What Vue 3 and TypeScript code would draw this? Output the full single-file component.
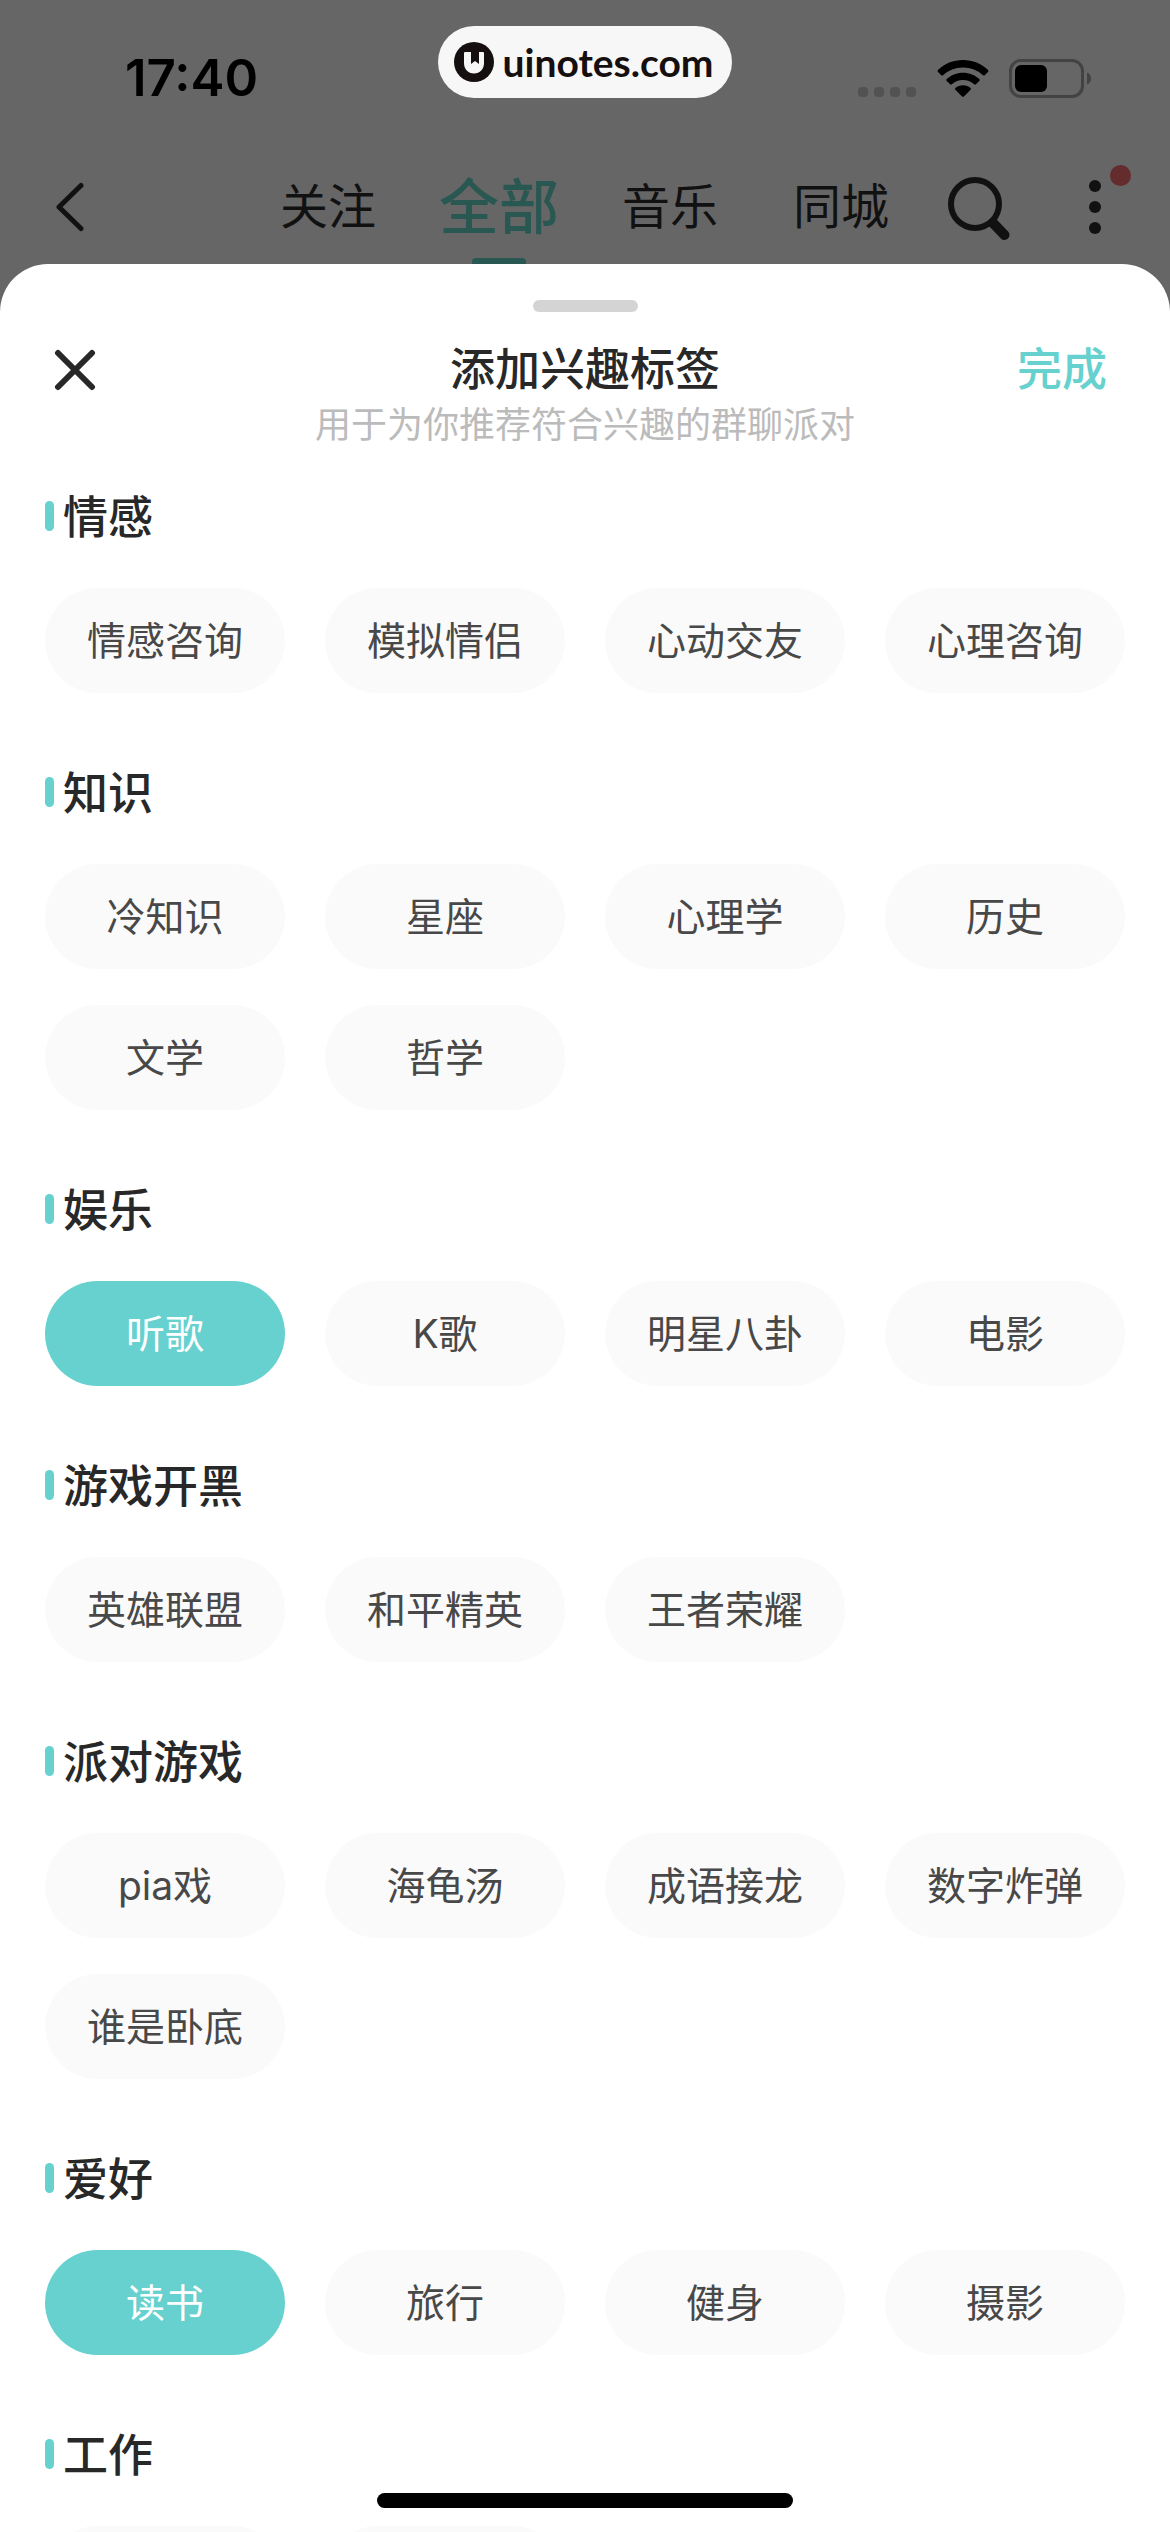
<script setup lang="ts">
import { reactive, ref } from 'vue'

interface Section {
  title: string
  tags: string[]
}

const tabs = ['关注', '全部', '音乐', '同城']
const activeTab = ref('全部')

const sections: Section[] = [
  { title: '情感', tags: ['情感咨询', '模拟情侣', '心动交友', '心理咨询'] },
  { title: '知识', tags: ['冷知识', '星座', '心理学', '历史', '文学', '哲学'] },
  { title: '娱乐', tags: ['听歌', 'K歌', '明星八卦', '电影'] },
  { title: '游戏开黑', tags: ['英雄联盟', '和平精英', '王者荣耀'] },
  { title: '派对游戏', tags: ['pia戏', '海龟汤', '成语接龙', '数字炸弹', '谁是卧底'] },
  { title: '爱好', tags: ['读书', '旅行', '健身', '摄影'] },
  { title: '工作', tags: ['', ''] },
]

const selected = reactive(new Set<string>(['听歌', '读书']))

function toggle(tag: string): void {
  if (!selected.delete(tag)) selected.add(tag)
}
</script>

<template>
  <div class="screen">
    <header class="status">
      <time class="clock">17:40</time>
      <div class="brand">
        <svg width="40" height="40" viewBox="0 0 40 40" aria-hidden="true">
          <circle cx="20" cy="20" r="20" fill="#15100f" />
          <path d="M11 10h6v12l4-3 4 3V10h4q1 0 1 1v10c0 6-4 10.500-10 10.500S10 27 10 21V11q0-1 1-1z" fill="#f7f7f7" />
        </svg>
        <span>uinotes.com</span>
      </div>
      <div class="indicators">
        <svg width="60" height="39" viewBox="0 0 60 39" fill="#525252" aria-hidden="true">
          <rect x="1" y="28" width="10" height="10" rx="4" />
          <rect x="17" y="28" width="10" height="10" rx="4" />
          <rect x="33" y="28" width="10" height="10" rx="4" />
          <rect x="49" y="28" width="10" height="10" rx="4" />
        </svg>
        <svg width="52" height="39" viewBox="0 0 52 39" aria-hidden="true">
          <path d="M26 1C16.300 1 7.500 4.700 1 10.900q-1 1 0 2l3.300 3.300q.8.800 1.700 0A29 29 0 0 1 26 8.500a29 29 0 0 1 20 7.700q.9.800 1.700 0l3.300-3.300q1-1 0-2C44.500 4.700 35.700 1 26 1z" />
          <path d="M26 13.700c-6.300 0-12 2.400-16.300 6.300q-1 1 0 2l3.400 3.300q.8.800 1.700 0a16.500 16.500 0 0 1 22.400 0q.9.800 1.700 0l3.400-3.300q1-1 0-2c-4.300-3.900-10-6.300-16.300-6.300z" />
          <path d="M26 26.300c-2.900 0-5.500 1-7.600 2.700q-.8.800 0 1.700l6.700 6.700q.9.800 1.800 0l6.700-6.700q.8-.9 0-1.700c-2.100-1.700-4.700-2.700-7.600-2.700z" />
        </svg>
        <svg width="83" height="39" viewBox="0 0 83 39" aria-hidden="true">
          <rect x="1.500" y="1.500" width="72" height="36" rx="10.500" fill="none" stroke="#434343" stroke-width="3" />
          <rect x="6" y="6" width="32" height="27" rx="6" />
          <path d="M78 13.500c3 1 4 3.500 4 6s-1 5-4 6z" fill="#434343" />
        </svg>
      </div>
    </header>

    <nav class="nav">
      <button class="icon back" type="button" aria-label="返回">
        <svg width="30" height="50" viewBox="0 0 30 50" fill="none" stroke="#111" stroke-width="5" stroke-linecap="round" stroke-linejoin="round">
          <path d="M26 3.500 4 25l22 21.500" />
        </svg>
      </button>
      <div class="tabs">
        <button
          v-for="tab in tabs"
          :key="tab"
          type="button"
          class="tab"
          :class="{ active: tab === activeTab }"
          @click="activeTab = tab"
        >
          {{ tab }}
        </button>
      </div>
      <button class="icon search" type="button" aria-label="搜索">
        <svg width="64" height="66" viewBox="0 0 64 66" fill="none" stroke="#111">
          <circle cx="27" cy="30" r="24" stroke-width="6" />
          <path d="M45 49 56.500 61" stroke-width="10" stroke-linecap="round" />
        </svg>
      </button>
      <button class="icon more" type="button" aria-label="更多">
        <svg width="12" height="54" viewBox="0 0 12 54" fill="#111">
          <circle cx="6" cy="6" r="6" />
          <circle cx="6" cy="27" r="6" />
          <circle cx="6" cy="48" r="6" />
        </svg>
        <span class="badge"></span>
      </button>
    </nav>

    <main class="sheet">
      <div class="handle"></div>
      <div class="sheet-head">
        <button class="icon" type="button" aria-label="关闭">
          <svg width="42" height="42" viewBox="0 0 42 42" fill="none" stroke="#282828" stroke-width="6" stroke-linecap="round">
            <path d="M4 4l34 34M38 4 4 38" />
          </svg>
        </button>
        <h1>添加兴趣标签</h1>
        <button class="done" type="button">完成</button>
      </div>
      <p class="hint">用于为你推荐符合兴趣的群聊派对</p>

      <section v-for="section in sections" :key="section.title" class="group">
        <h2><span>{{ section.title }}</span></h2>
        <div class="chips">
          <button
            v-for="(tag, i) in section.tags"
            :key="i"
            type="button"
            class="chip"
            :class="{ on: selected.has(tag) }"
            :aria-pressed="selected.has(tag)"
            @click="toggle(tag)"
          >
            {{ tag }}
          </button>
        </div>
      </section>
    </main>

    <div class="home-bar"></div>
  </div>
</template>

<style>
body {
  margin: 0;
}
</style>

<style scoped>
.screen {
  position: relative;
  display: flex;
  flex-direction: column;
  height: 100vh;
  overflow: hidden;
  background: #666;
  color: #282828;
  font-family: Inter, 'Noto Sans CJK SC', sans-serif;
}

button {
  margin: 0;
  padding: 0;
  border: 0;
  background: none;
  color: inherit;
  font: inherit;
  cursor: pointer;
}

svg {
  display: block;
}

.status {
  flex: none;
  display: grid;
  grid-template-columns: 1fr auto 1fr;
  align-items: center;
  height: 156px;
  padding: 0 78px;
  box-sizing: border-box;
}

.clock {
  padding-left: 47px;
  color: #000;
  font-size: 51px;
  font-weight: 600;
  line-height: 60px;
}

.brand {
  display: flex;
  align-items: center;
  gap: 8px;
  height: 72px;
  margin-bottom: 32px;
  padding: 0 18px 0 16px;
  border-radius: 36px;
  background: #f7f7f7;
  color: #15100f;
  font-family: Lato, sans-serif;
  font-size: 39px;
  font-weight: 700;
  line-height: 48px;
}

.indicators {
  display: flex;
  justify-content: flex-end;
  gap: 20px;
}

.nav {
  flex: none;
  display: flex;
  align-items: center;
  height: 108px;
  padding: 0 69px 0 55px;
  box-sizing: border-box;
  color: #111;
}

.tabs {
  display: flex;
  gap: 75px;
  height: 108px;
  margin-left: auto;
}

.tab {
  position: relative;
  display: flex;
  align-items: center;
  justify-content: center;
  width: 96px;
  padding-bottom: 6px;
  font-size: 48px;
  line-height: 72px;
  white-space: nowrap;
}

.tab.active {
  color: #295752;
  font-size: 60px;
  font-weight: 500;
}

.tab.active::after {
  content: '';
  position: absolute;
  bottom: 0;
  left: 21px;
  width: 54px;
  height: 6px;
  border-radius: 4px 4px 0 0;
  background: #295752;
}

.back,
.search,
.more {
  margin-bottom: 6px;
}

.search {
  margin-left: 59px;
}

.more {
  position: relative;
  margin-left: 77px;
}

.badge {
  position: absolute;
  top: -15px;
  left: 21px;
  width: 21px;
  height: 21px;
  border-radius: 50%;
  background: #642c2c;
}

.sheet {
  flex: 1;
  min-height: 0;
  overflow: hidden;
  padding: 36px 45px 0;
  border-radius: 48px 48px 0 0;
  background: #fff;
}

.handle {
  width: 105px;
  height: 12px;
  margin: 0 auto 28px;
  border-radius: 6px;
  background: #d4d4d4;
}

.sheet-head {
  display: grid;
  grid-template-columns: 1fr auto 1fr;
  align-items: center;
  height: 60px;
  padding: 0 9px;
  margin-bottom: 1px;
}

.sheet-head .icon {
  justify-self: start;
}

h1,
h2,
p {
  margin: 0;
}

h1,
h2,
.done {
  font-size: 45px;
  font-weight: 500;
  line-height: 60px;
}

.done {
  justify-self: end;
  padding-right: 9px;
  color: #66d1ce;
}

.hint {
  margin-bottom: 37px;
  color: #bbb;
  font-size: 36px;
  line-height: 48px;
  text-align: center;
}

h2 {
  display: flex;
  align-items: center;
  gap: 9px;
  height: 60px;
  margin-bottom: 42px;
}

h2 span {
  padding-top: 4px;
}

h2::before {
  content: '';
  width: 9px;
  height: 30px;
  border-radius: 5px;
  background: #66d1ce;
}

.group {
  margin-bottom: 69px;
}

.chips {
  display: grid;
  grid-template-columns: repeat(4, 1fr);
  gap: 36px 40px;
}

.chip {
  height: 105px;
  border-radius: 53px;
  background: #fafafa;
  color: #484848;
  font-size: 39px;
  line-height: 48px;
}

.chip.on {
  background: #66d1ce;
  color: #fff;
}

.home-bar {
  position: absolute;
  bottom: 24px;
  left: 50%;
  width: 416px;
  height: 15px;
  border-radius: 8px;
  background: #000;
  transform: translateX(-50%);
}
</style>
